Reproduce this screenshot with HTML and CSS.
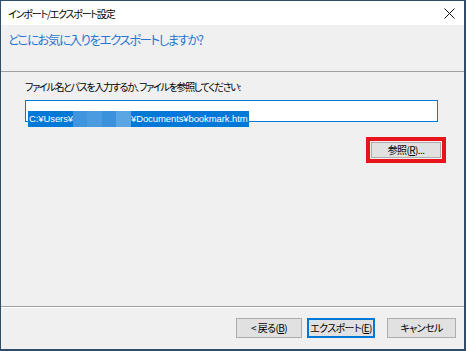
FILE: index.html
```html
<!DOCTYPE html>
<html lang="ja">
<head>
  <meta charset="UTF-8">
  <title>インポート/エクスポート設定</title>
  <link rel="stylesheet" href="styles.css">
</head>
<body>
  <div class="window">
    <div class="titlebar">
      <span class="title">インポート/エクスポート設定</span>
      <svg class="close" width="11" height="11" viewBox="0 0 11 11">
        <path d="M0.5 0.5 L10.5 10.5 M10.5 0.5 L0.5 10.5" stroke="#111" stroke-width="1" fill="none"/>
      </svg>
    </div>

    <div class="content">
      <h1 class="instruction">どこにお気に入りをエクスポートしますか?</h1>
      <div class="separator"></div>

      <div class="page">
        <p class="label">ファイル名とパスを入力するか、ファイルを参照してください:</p>
        <div class="path-input">
          <span class="selected">C:¥Users¥<span class="masked"><i></i><i></i><i></i><i></i></span>¥Documents¥bookmark.htm</span>
        </div>
        <div class="browse-row">
          <div class="highlight">
            <button class="btn browse">参照(<u>R</u>)...</button>
          </div>
        </div>
      </div>

      <div class="footer">
        <button class="btn back">&lt;&nbsp;戻る(<u>B</u>)</button>
        <button class="btn export default">エクスポート(<u>E</u>)</button>
        <button class="btn cancel">キャンセル</button>
      </div>
    </div>
  </div>
</body>
</html>
```

FILE: styles.css
```css
html, body {
  margin: 0;
  padding: 0;
}
body {
  width: 466px;
  height: 351px;
  font-family: "Noto Sans CJK JP", sans-serif;
  font-feature-settings: "palt";
  color: #000;
}
.window {
  box-sizing: border-box;
  width: 466px;
  height: 351px;
  border-style: solid;
  border-color: #2e4d6c;
  border-width: 1px 2px 2px 1px;
  display: flex;
  flex-direction: column;
  background-color: #f0f0f0;
}
.titlebar {
  height: 24px;
  background-color: #fff;
  display: flex;
  align-items: center;
  justify-content: space-between;
  padding: 0 9px 0 7px;
}
.title {
  font-size: 10px;
  letter-spacing: -1.2px;
  white-space: nowrap;
}
.close {
  display: block;
}
.content {
  flex: 1;
  display: flex;
  flex-direction: column;
}
.instruction {
  margin: 0;
  padding: 6px 0 0 7px;
  height: 32px;
  box-sizing: border-box;
  font-size: 12.5px;
  font-weight: normal;
  color: #2a75cf;
  line-height: 18px;
  letter-spacing: -1.5px;
  white-space: nowrap;
}
.separator {
  margin-top: 14px;
  border-top: 1px solid #a0a0a0;
}
.page {
  padding: 7px 25px 0 24px;
}
.label {
  margin: 0;
  font-size: 10px;
  line-height: 16px;
  letter-spacing: -1.3px;
  white-space: nowrap;
}
.path-input {
  margin-top: 5px;
  width: 413px;
  height: 22px;
  box-sizing: border-box;
  border: 1px solid #0078d7;
  background-color: #fff;
  padding: 2px 0 0 2px;
}
.selected {
  display: inline-flex;
  align-items: center;
  height: 16px;
  padding: 0 1px;
  background-color: #0078d7;
  color: #fff;
  font-family: "Liberation Sans", Arial, sans-serif;
  font-size: 9.5px;
  letter-spacing: -0.1px;
  white-space: nowrap;
}
.masked {
  display: inline-flex;
  width: 58px;
  height: 16px;
}
.masked i {
  flex: 1;
  background-color: #3f95de;
}
.masked i:nth-child(2) {
  background-color: #4a9be0;
}
.masked i:nth-child(3) {
  background-color: #3b91dc;
}
.masked i:nth-child(4) {
  background-color: #5aa5e3;
}
.browse-row {
  display: flex;
  justify-content: flex-end;
  margin-top: 15px;
  margin-right: -7px;
}
.highlight {
  border: 4px solid #e8141c;
  padding: 1px;
}
.btn {
  box-sizing: border-box;
  height: 20px;
  background-color: #e1e1e1;
  border: 1px solid #adadad;
  font-family: "Noto Sans CJK JP", sans-serif;
  font-feature-settings: "palt";
  font-size: 10px;
  letter-spacing: -0.6px;
  white-space: nowrap;
  color: #000;
  padding: 0;
  line-height: 16px;
}
.btn u {
  text-underline-offset: 1px;
}
.browse {
  display: block;
  width: 70px;
  height: 16px;
  line-height: 14px;
}
.footer {
  margin-top: auto;
  border-top: 1px solid #a0a0a0;
  box-shadow: inset 0 1px 0 #fff;
  height: 42px;
  display: flex;
  align-items: center;
  justify-content: flex-end;
  padding: 0 8px 0 0;
  gap: 5px;
}
.back {
  width: 66px;
}
.export {
  width: 68px;
}
.default {
  border-color: #0078d7;
  box-shadow: inset 0 0 0 1px #0078d7;
}
.cancel {
  width: 69px;
  margin-left: 7px;
}
```
